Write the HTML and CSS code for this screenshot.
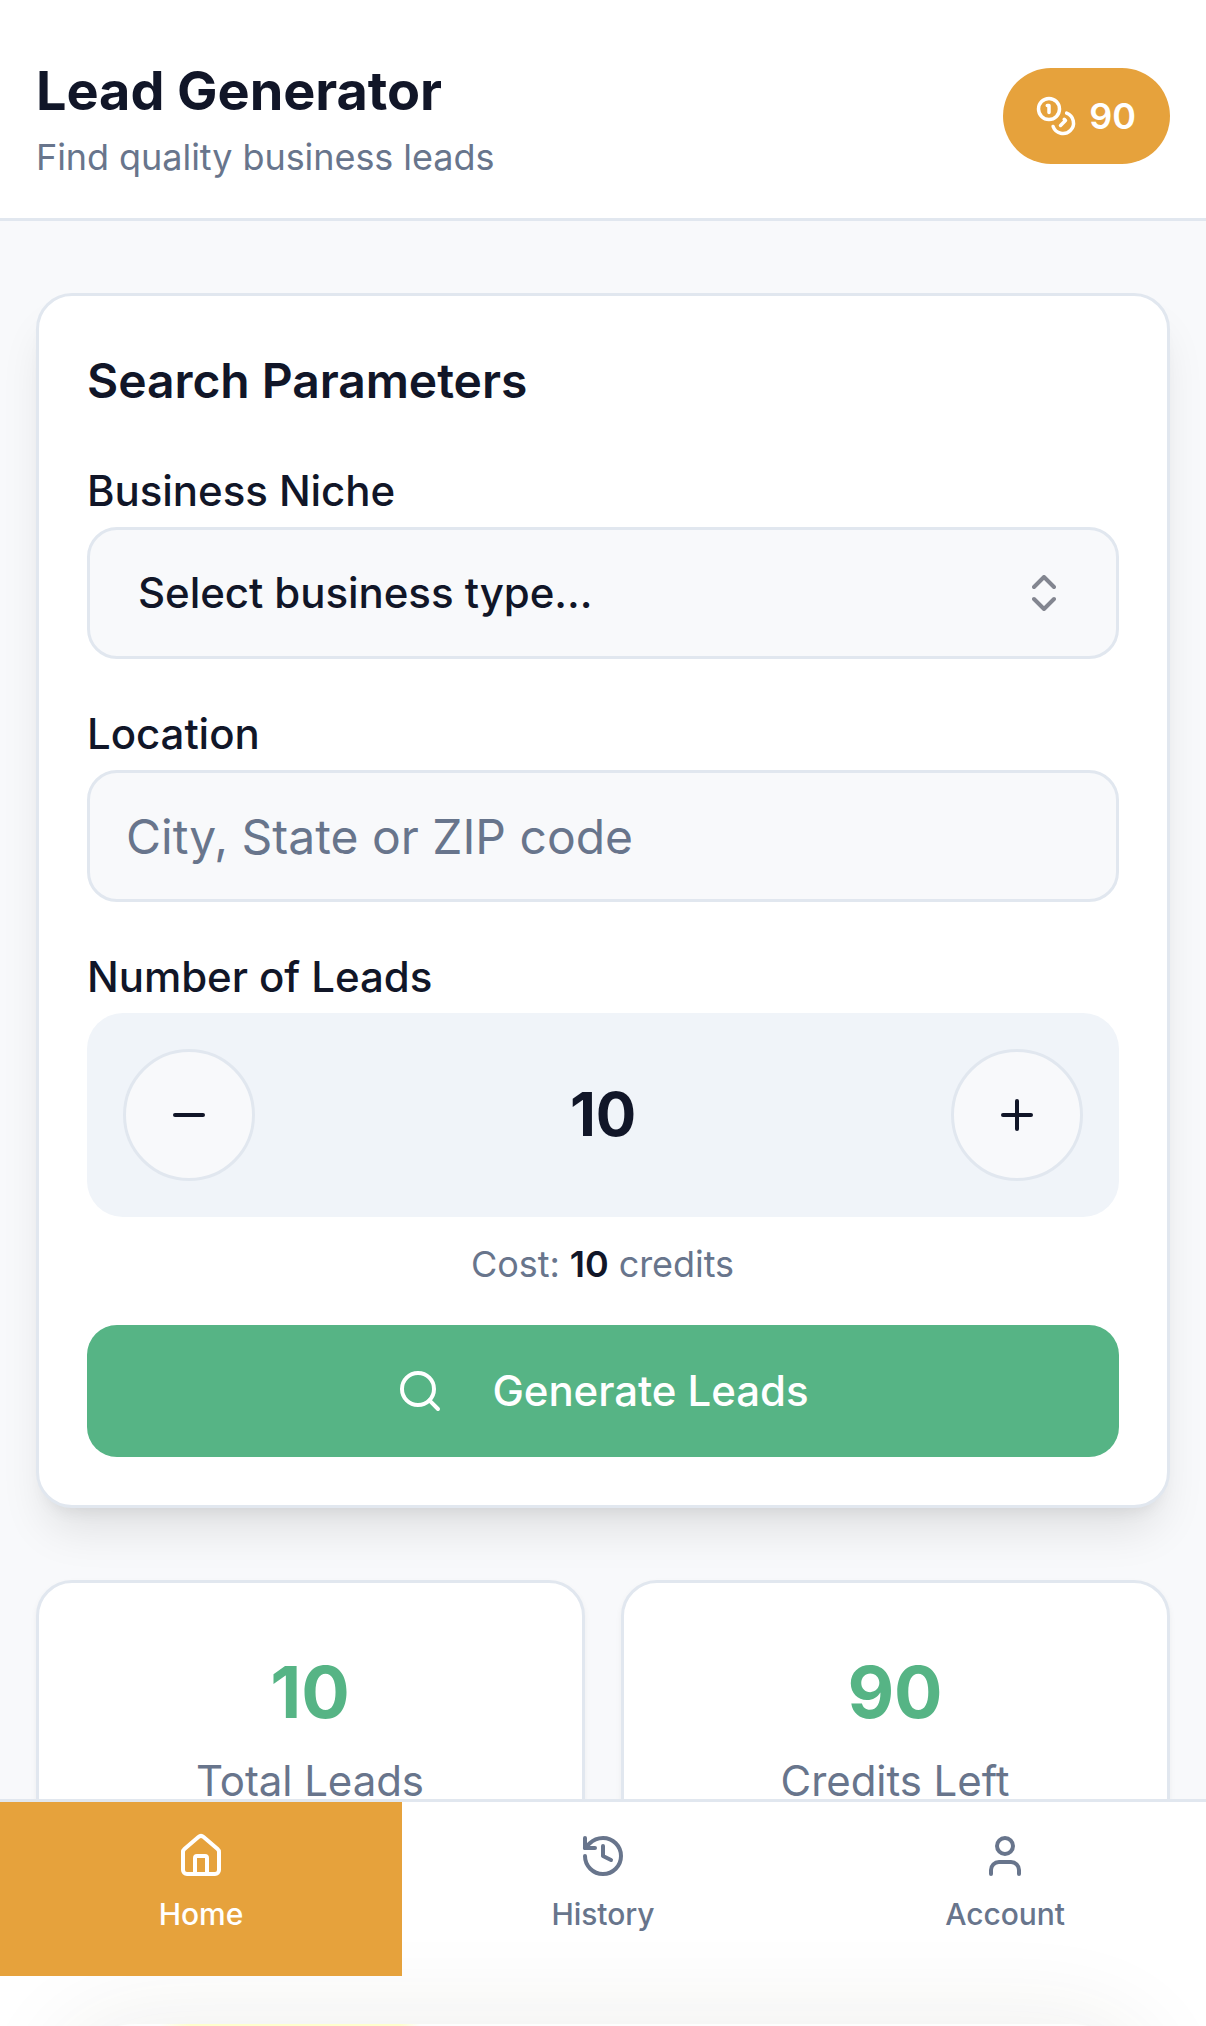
FILE: index.html
```html
<!DOCTYPE html>
<html lang="en">
  <head>
    <meta charset="UTF-8" />
    <meta name="viewport" content="width=device-width, initial-scale=1.0" />
    <title>Lead Generator</title>
    <link rel="stylesheet" href="styles.css">
  </head>
  <body>
    <header class="header">
      <div>
        <h1 class="title">Lead Generator</h1>
        <p class="subtitle">Find quality business leads</p>
      </div>
      <div class="credits">
        <svg class="icon icon-small" viewBox="0 0 24 24">
          <circle cx="8" cy="8" r="6" />
          <path d="M18.09 10.37A6 6 0 1 1 10.34 18" />
          <path d="M7 6h1v4" />
          <path d="m16.71 13.88.7.71-2.82 2.82" />
        </svg>
        <span>90</span>
      </div>
    </header>

    <main class="content">
      <section class="card search-card">
        <h2 class="card-title">Search Parameters</h2>

        <div class="field">
          <label class="label">Business Niche</label>
          <button class="select">
            <span class="button-text">Select business type...</span>
            <svg class="icon faded" viewBox="0 0 24 24">
              <path d="m7 15 5 5 5-5" />
              <path d="m7 9 5-5 5 5" />
            </svg>
          </button>
        </div>

        <div class="field">
          <label class="label" for="location">Location</label>
          <input class="input" type="text" id="location" placeholder="City, State or ZIP code" />
        </div>

        <div class="field">
          <label class="label">Number of Leads</label>
          <div class="stepper">
            <button class="round-button" id="minus" aria-label="Fewer leads">
              <svg class="icon" viewBox="0 0 24 24"><path d="M5 12h14" /></svg>
            </button>
            <span class="count" id="count">10</span>
            <button class="round-button" id="plus" aria-label="More leads">
              <svg class="icon" viewBox="0 0 24 24">
                <path d="M5 12h14" />
                <path d="M12 5v14" />
              </svg>
            </button>
          </div>
          <p class="cost">Cost: <strong id="cost">10</strong> credits</p>
        </div>

        <button class="generate">
          <svg class="icon" viewBox="0 0 24 24">
            <circle cx="11" cy="11" r="8" />
            <path d="m21 21-4.3-4.3" />
          </svg>
          <span class="button-text">Generate Leads</span>
        </button>
      </section>

      <section class="stats">
        <div class="card stat">
          <div class="stat-value">10</div>
          <div class="stat-label">Total Leads</div>
        </div>
        <div class="card stat">
          <div class="stat-value">90</div>
          <div class="stat-label">Credits Left</div>
        </div>
      </section>
    </main>

    <nav class="bottom-nav">
      <a class="nav-item active">
        <svg class="icon" viewBox="0 0 24 24">
          <path d="M15 21v-8a1 1 0 0 0-1-1h-4a1 1 0 0 0-1 1v8" />
          <path d="M3 10a2 2 0 0 1 .709-1.528l7-5.999a2 2 0 0 1 2.582 0l7 5.999A2 2 0 0 1 21 10v9a2 2 0 0 1-2 2H5a2 2 0 0 1-2-2z" />
        </svg>
        <span>Home</span>
      </a>
      <a class="nav-item">
        <svg class="icon" viewBox="0 0 24 24">
          <path d="M3 12a9 9 0 1 0 9-9 9.75 9.75 0 0 0-6.74 2.74L3 8" />
          <path d="M3 3v5h5" />
          <path d="M12 7v5l4 2" />
        </svg>
        <span>History</span>
      </a>
      <a class="nav-item">
        <svg class="icon" viewBox="0 0 24 24">
          <path d="M19 21v-2a4 4 0 0 0-4-4H9a4 4 0 0 0-4 4v2" />
          <circle cx="12" cy="7" r="4" />
        </svg>
        <span>Account</span>
      </a>
      <div class="bottom-glow"></div>
    </nav>

    <script>
      let leads = 10;

      function setLeads(value) {
        leads = Math.max(1, value);
        document.getElementById("count").textContent = leads;
        document.getElementById("cost").textContent = leads;
      }

      document.getElementById("minus").onclick = () => setLeads(leads - 1);
      document.getElementById("plus").onclick = () => setLeads(leads + 1);
    </script>
  </body>
</html>
```

FILE: styles.css
```css
* {
  box-sizing: border-box;
}

body {
  margin: 0;
  height: 2026px;
  overflow: hidden;
  background-color: #f8f9fb;
  color: #111628;
  font-family: Inter, "Liberation Sans", sans-serif;
  letter-spacing: -0.06px;
}

h1,
h2,
p {
  margin: 0;
}

button,
input {
  font-family: inherit;
  color: inherit;
}

button {
  letter-spacing: inherit;
}

.icon {
  width: 48px;
  height: 48px;
  flex-shrink: 0;
  fill: none;
  stroke: currentColor;
  stroke-width: 2;
  stroke-linecap: round;
  stroke-linejoin: round;
}

.icon-small {
  width: 42px;
  height: 42px;
}

.faded {
  opacity: 0.5;
}

.header {
  display: flex;
  justify-content: space-between;
  align-items: center;
  padding: 49px 36px 35px;
  background-color: #fff;
  border-bottom: 3px solid #e1e7ef;
}

.title {
  font-size: 54px;
  line-height: 83px;
  font-weight: 700;
}

.subtitle {
  font-size: 36px;
  line-height: 51px;
  color: #68758c;
}

.credits {
  display: flex;
  align-items: center;
  gap: 12px;
  height: 96px;
  padding: 0 34px 0 32px;
  border-radius: 48px;
  background-color: #e6a23c;
  color: #fff;
  font-size: 36px;
  font-weight: 600;
}

.content {
  padding: 72px 36px;
}

.card {
  background-color: #fff;
  border: 3px solid #e1e7ef;
  border-radius: 36px;
}

.search-card {
  padding: 48px;
  box-shadow: 0 30px 45px -9px rgba(0, 0, 0, 0.1),
    0 12px 18px -12px rgba(0, 0, 0, 0.1);
}

.card-title {
  margin-bottom: 40px;
  font-size: 48px;
  line-height: 74px;
  font-weight: 600;
}

.field {
  margin-bottom: 42px;
}

.label {
  display: block;
  margin-bottom: 4px;
  font-size: 42px;
  line-height: 65px;
  font-weight: 500;
}

.select,
.input {
  display: flex;
  width: 100%;
  height: 132px;
  border: 3px solid #e1e7ef;
  border-radius: 30px;
  background-color: #f8f9fb;
}

.select {
  justify-content: space-between;
  align-items: center;
  padding: 0 48px;
  font-size: 42px;
  font-weight: 500;
}

.button-text {
  margin-bottom: 2px;
}

.input {
  padding: 0 36px;
  font-size: 48px;
}

.input::placeholder {
  color: #68758c;
}

.stepper {
  display: flex;
  justify-content: space-between;
  align-items: center;
  padding: 36px;
  border-radius: 36px;
  background-color: #f0f4f9;
}

.round-button {
  display: flex;
  justify-content: center;
  align-items: center;
  width: 132px;
  height: 132px;
  padding: 0;
  border: 3px solid #e1e7ef;
  border-radius: 50%;
  background-color: #f8f9fb;
}

.count {
  margin-bottom: 2px;
  font-size: 60px;
  font-weight: 700;
}

.cost {
  margin: 23px 1px 43px 0;
  font-size: 36px;
  line-height: 48px;
  text-align: center;
  color: #68758c;
}

.cost strong {
  font-weight: 600;
  color: #111628;
}

.generate {
  display: flex;
  justify-content: center;
  align-items: center;
  gap: 48px;
  width: 100%;
  height: 132px;
  margin-top: -6px;
  padding: 0 1px 0 0;
  border: none;
  border-radius: 30px;
  background-color: #56b485;
  color: #fff;
  font-size: 42px;
  font-weight: 500;
}

.stats {
  display: grid;
  grid-template-columns: 1fr 1fr;
  gap: 36px;
  margin-top: 72px;
}

.stat {
  padding: 60px 49px 60px 48px;
  text-align: center;
  box-shadow: 0 3px 6px rgba(0, 0, 0, 0.05);
}

.stat-value {
  font-size: 72px;
  line-height: 98px;
  font-weight: 700;
  color: #56b485;
}

.stat-label {
  font-size: 42px;
  line-height: 80px;
  color: #68758c;
}

.bottom-nav {
  position: fixed;
  left: 0;
  right: 0;
  bottom: 0;
  display: grid;
  grid-template-columns: repeat(3, 1fr);
  height: 227px;
  overflow: hidden;
  background-color: #fff;
  border-top: 3px solid #e1e7ef;
}

.nav-item {
  position: relative;
  z-index: 1;
  display: flex;
  flex-direction: column;
  align-items: center;
  gap: 12px;
  height: 174px;
  padding-top: 30px;
  color: #68758c;
  font-size: 30px;
  line-height: 45px;
  font-weight: 500;
}

.active {
  background-color: #e6a23c;
  color: #fff;
}

/* soft glow above the bottom edge of the screen */
.bottom-glow {
  position: absolute;
  left: 60px;
  right: 60px;
  top: 222px;
  height: 150px;
  border-radius: 75px;
  background: linear-gradient(90deg, transparent 100px, #ffffcc 130px, #ffffcc 340px, transparent 360px) #fdfdfd;
  box-shadow: 0 0 100px rgba(60, 50, 30, 0.09);
}
```
